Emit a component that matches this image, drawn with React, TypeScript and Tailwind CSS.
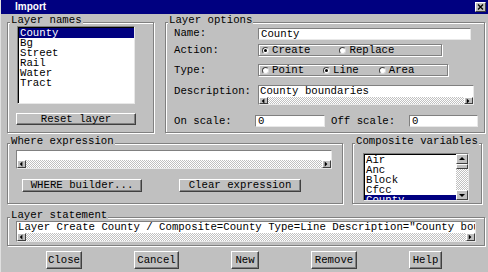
import React from 'react';

const raised = 'bg-[#c0c0c0] border border-t-white border-l-white border-b-[#404040] border-r-[#404040]';
const sunken = 'border border-t-[#808080] border-l-[#808080] border-b-[#e8e8e8] border-r-[#e8e8e8]';
const etched = 'border border-[#808080] shadow-[inset_1px_1px_0_#fff,1px_1px_0_#fff]';
const checker = 'bg-[conic-gradient(#c0c0c0_25%,#fff_0_50%,#c0c0c0_0_75%,#fff_0)] bg-[length:2px_2px]';

const Frame = ({ label, className, children }: { label: string; className: string; children?: React.ReactNode }) => (
  <div className={`relative ${etched} ${className}`}>
    <span className="absolute -top-[8px] left-[2px] bg-[#c0c0c0] px-[1px] leading-[11px] whitespace-nowrap">{label}</span>
    {children}
  </div>
);

const Arrow = ({ dir }: { dir: 'l' | 'r' | 'u' | 'd' }) => {
  const pts = { l: '5,1 2,4 5,7', r: '2,1 5,4 2,7', u: '1,5 4,2 7,5', d: '1,3 4,6 7,3' }[dir];
  return (
    <svg width="8" height="8" viewBox="0 0 8 8" className="block">
      <polygon points={pts} fill="#000" />
    </svg>
  );
};

const HScroll = ({ h = 'h-[8px]' }: { h?: string }) => (
  <div className={`flex ${h} ${checker}`}>
    <div className={`${raised} w-[9px] flex items-center justify-center`}>
      <Arrow dir="l" />
    </div>
    <div className="flex-1" />
    <div className={`${raised} w-[9px] flex items-center justify-center`}>
      <Arrow dir="r" />
    </div>
  </div>
);

const Radio = ({ on }: { on?: boolean }) => (
  <span className="w-[7px] h-[7px] rounded-full bg-white border border-t-[#404040] border-l-[#404040] border-b-[#dcdcdc] border-r-[#dcdcdc] flex items-center justify-center">
    {on && <span className="w-[3px] h-[3px] rounded-full bg-black" />}
  </span>
);

const RadioItem = ({ on, label, className = '' }: { on?: boolean; label: string; className?: string }) => (
  <div className={`flex items-center gap-[3px] ${className}`}>
    <Radio on={on} />
    <span>{label}</span>
  </div>
);

const Btn = ({ label, className }: { label: string; className: string }) => (
  <button className={`${raised} shadow-[inset_-1px_-1px_0_#808080] flex items-center justify-center leading-none whitespace-nowrap ${className}`}>
    {label}
  </button>
);

const layerNames = ['County', 'Bg', 'Street', 'Rail', 'Water', 'Tract'];
const composite = ['Air', 'Anc', 'Block', 'Cfcc', 'County'];

export default function App() {
  return (
    <div className="w-[488px] h-[272px] bg-[#c0c0c0] border-l border-[#e0e0e0] font-['Liberation_Mono',monospace] text-[10.7px] leading-[11px] text-black overflow-hidden">
      {/* title bar */}
      <div className="h-[14px] bg-[#000080] flex items-center pl-[14px] pr-[2px]">
        <span className="font-['Liberation_Sans',sans-serif] font-bold text-[10px] text-white leading-none">Import</span>
        <div className={`${raised} ml-auto w-[11px] h-[10px] flex items-center justify-center`}>
          <svg width="7" height="6" viewBox="0 0 7 6">
            <path d="M1 0.5 L6 5.5 M6 0.5 L1 5.5" stroke="#000" strokeWidth="1.4" />
          </svg>
        </div>
      </div>

      <div className="pl-[6px] pt-[8px]">
        {/* row 1 */}
        <div className="flex gap-[11px]">
          <Frame label="Layer names" className="w-[147px] h-[111px]">
            <div className={`ml-[9px] mt-[3px] w-[118px] h-[78px] bg-white ${sunken} shadow-[inset_1px_1px_0_#000]`}>
              <div className="pt-[1px] pl-[1px]">
                {layerNames.map((n, i) => (
                  <div
                    key={n}
                    className={`h-[10px] leading-[10px] pl-[1px] ${i === 0 ? 'bg-[#000080] text-white' : ''}`}
                  >
                    {n}
                  </div>
                ))}
              </div>
            </div>
            <Btn label="Reset layer" className="ml-[8px] mt-[9px] w-[120px] h-[12px]" />
          </Frame>

          <Frame label="Layer options" className="w-[320px] h-[111px]">
            <div className="pl-[8px] pt-[5px] grid grid-cols-[84px_1fr] items-center">
              <div className="self-start">Name:</div>
              <div className={`w-[213px] h-[12px] bg-white ${sunken} leading-[10px] pl-[2px]`}>County</div>

              <div className="mt-[4px]">Action:</div>
              <div className={`mt-[4px] w-[184px] h-[12px] ${etched} flex items-center pl-[3px]`}>
                <RadioItem on label="Create" />
                <RadioItem label="Replace" className="ml-[29px]" />
              </div>

              <div className="mt-[8px]">Type:</div>
              <div className={`mt-[8px] w-[190px] h-[12px] ${etched} flex items-center pl-[3px]`}>
                <RadioItem label="Point" />
                <RadioItem on label="Line" className="ml-[19px]" />
                <RadioItem label="Area" className="ml-[20px]" />
              </div>

              <div className="self-start mt-[10px]">Description:</div>
              <div className={`mt-[9px] w-[216px] ${sunken}`}>
                <div className="h-[11px] bg-white leading-[11px] pl-[1px]">County boundaries</div>
                <HScroll h="h-[7px]" />
              </div>
            </div>
            <div className="flex items-center pl-[8px] mt-[10px]">
              <span className="w-[81px] whitespace-nowrap">On scale:</span>
              <div className={`w-[70px] h-[12px] bg-white ${sunken} leading-[10px] pl-[2px]`}>0</div>
              <span className="ml-[6px] w-[78px] whitespace-nowrap">Off scale:</span>
              <div className={`w-[69px] h-[12px] bg-white ${sunken} leading-[10px] pl-[2px]`}>0</div>
            </div>
          </Frame>
        </div>

        {/* row 2 */}
        <div className="flex gap-[9px] mt-[10px]">
          <Frame label="Where expression" className="w-[336px] h-[61px]">
            <div className={`ml-[8px] mt-[6px] w-[316px] ${sunken}`}>
              <div className="h-[9px] bg-white" />
              <HScroll h="h-[8px]" />
            </div>
            <div className="flex ml-[14px] mt-[10px] gap-[37px]">
              <Btn label="WHERE builder..." className="w-[120px] h-[13px]" />
              <Btn label="Clear expression" className="w-[122px] h-[13px]" />
            </div>
          </Frame>

          <Frame label="Composite variables" className="w-[130px] h-[61px]">
            <div className={`ml-[10px] mt-[9px] w-[106px] h-[48px] bg-white ${sunken} shadow-[inset_1px_1px_0_#000] flex`}>
              <div className="flex-1 pt-[1px] pl-[1px] overflow-hidden">
                {composite.map((n, i) => (
                  <div
                    key={n}
                    className={`h-[10px] leading-[10px] pl-[1px] ${i === 4 ? 'bg-[#000080] text-white' : ''}`}
                  >
                    {n}
                  </div>
                ))}
              </div>
              <div className={`w-[12px] flex flex-col ${checker}`}>
                <div className={`${raised} h-[10px] flex items-center justify-center`}>
                  <Arrow dir="u" />
                </div>
                <div className={`${raised} h-[5px]`} />
                <div className="flex-1" />
                <div className={`${raised} h-[10px] flex items-center justify-center`}>
                  <Arrow dir="d" />
                </div>
              </div>
            </div>
          </Frame>
        </div>

        {/* row 3 */}
        <Frame label="Layer statement" className="mt-[13px] w-[478px] h-[29px]">
          <div className={`ml-[8px] mt-[3px] w-[460px] ${sunken}`}>
            <div className="h-[11px] bg-white leading-[11px] pl-[1px] whitespace-nowrap overflow-hidden">
              Layer Create County / Composite=County Type=Line Description="County boundaries"
            </div>
            <HScroll h="h-[8px]" />
          </div>
        </Frame>

        {/* buttons */}
        <div className="flex ml-[39px] mt-[5px] gap-[52px]">
          <Btn label="Close" className="w-[36px] h-[18px]" />
          <Btn label="Cancel" className="w-[45px] h-[18px]" />
          <Btn label="New" className="w-[28px] h-[18px]" />
          <Btn label="Remove" className="w-[46px] h-[18px]" />
          <Btn label="Help" className="w-[33px] h-[18px]" />
        </div>
      </div>
    </div>
  );
}
